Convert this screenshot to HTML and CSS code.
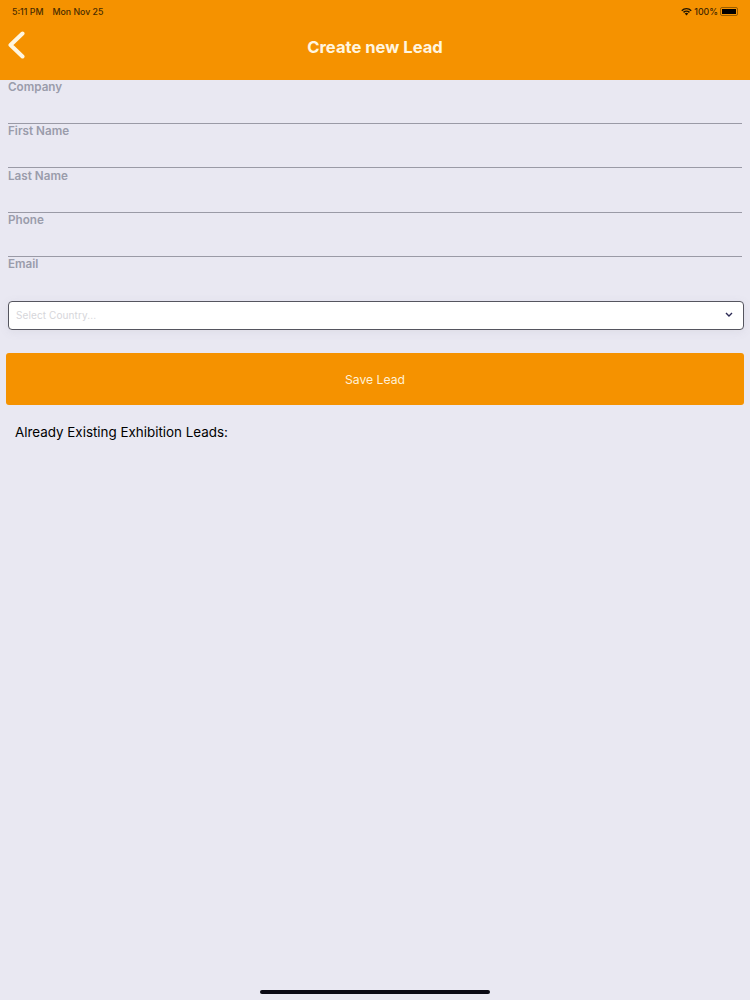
FILE: index.html
```html
<!DOCTYPE html>
<html lang="en">

<head>
    <meta charset="UTF-8">
    <meta name="viewport" content="width=device-width, initial-scale=1.0">
    <title>Create new Lead</title>
    <link rel="stylesheet" href="styles.css">
</head>

<body>
    <div class="container">
        <header class="topbar">
            <div class="status">
                <span class="status-time">5:11 PM</span>
                <span class="status-date">Mon Nov 25</span>
                <span class="status-right">
                    <svg class="wifi" width="11" height="9" viewBox="0 0 12 9">
                        <path d="M0.3 3 A8 8 0 0 1 11.7 3 L10.6 4.1 A6.4 6.4 0 0 0 1.4 4.1 Z" />
                        <path d="M2.2 4.9 A5.4 5.4 0 0 1 9.8 4.9 L8.7 6 A3.8 3.8 0 0 0 3.3 6 Z" />
                        <path d="M4.1 6.8 A2.7 2.7 0 0 1 7.9 6.8 L6 8.8 Z" />
                    </svg>
                    <span>100%</span>
                    <span class="battery"><span class="battery-fill"></span></span>
                </span>
            </div>
            <div class="navbar">
                <a class="back" href="#">
                    <svg width="18" height="30" viewBox="0 0 18 30">
                        <path d="M15.5 3.5 L3.5 15 L15.5 26.5" />
                    </svg>
                </a>
                <h1>Create new Lead</h1>
            </div>
        </header>

        <main>
            <form class="lead-form">
                <div class="field"><label>Company</label></div>
                <div class="field"><label>First Name</label></div>
                <div class="field"><label>Last Name</label></div>
                <div class="field"><label>Phone</label></div>
                <div class="field field-last"><label>Email</label></div>

                <div class="select">
                    <span class="select-text">Select Country...</span>
                    <svg width="8" height="6" viewBox="0 0 8 6">
                        <path d="M1 1 L4 4 L7 1" />
                    </svg>
                </div>

                <button class="save" type="button">Save Lead</button>
            </form>

            <h2 class="existing">Already Existing Exhibition Leads:</h2>
        </main>

        <div class="home-bar"></div>
    </div>
</body>

</html>
```

FILE: styles.css
```css
* {
    margin: 0;
    padding: 0;
    box-sizing: border-box;
}

body {
    font-family: Inter, "Liberation Sans", sans-serif;
    background-color: #e9e8f2;
}

.container {
    width: 750px;
    height: 1000px;
    position: relative;
    overflow: hidden;
    background-color: #e9e8f2;
}

.topbar {
    height: 80px;
    background-color: #f59200;
}

.status {
    height: 19px;
    padding: 3px 12px 0 12px;
    display: flex;
    align-items: center;
    font-size: 8.8px;
    font-weight: 500;
    color: #4a2c00;
}

.status-date {
    margin-left: 9px;
}

.status-right {
    margin-left: auto;
    display: flex;
    align-items: center;
    gap: 2px;
    color: #3d2500;
}

.wifi path {
    fill: #1f1400;
}

.battery {
    width: 18px;
    height: 9px;
    padding: 1px;
    border: 1px solid #9a5e00;
    border-radius: 2px;
    display: block;
}

.battery-fill {
    display: block;
    height: 100%;
    background-color: #000;
}

.navbar {
    height: 55px;
    position: relative;
    display: flex;
    align-items: center;
    justify-content: center;
}

.navbar h1 {
    font-size: 16.6px;
    font-weight: 700;
    color: #fff6e0;
}

.back {
    position: absolute;
    left: 7px;
    top: 11px;
    display: block;
    height: 30px;
}

.back path {
    fill: none;
    stroke: #fff6e0;
    stroke-width: 4;
    stroke-linecap: round;
    stroke-linejoin: round;
}

.lead-form {
    padding: 0 6px 0 6px;
}

.field {
    height: 44.2px;
    margin: 0 2px;
    border-bottom: 1px solid #9a9aa6;
}

.field label {
    display: block;
    padding-top: 0.2px;
    font-size: 11.7px;
    line-height: 14px;
    font-weight: 600;
    color: #9a9cab;
}

.field-last {
    border-bottom: none;
}

.select {
    height: 29px;
    margin: 0 0 0 2px;
    padding: 0 10px 0 7px;
    display: flex;
    align-items: center;
    justify-content: space-between;
    background-color: #fff;
    border: 1.5px solid #55555f;
    border-radius: 4px;
    box-shadow: 0 2px 10px rgba(120, 120, 140, 0.1);
}

.select-text {
    font-size: 10px;
    letter-spacing: 0.1px;
    color: #d6d6da;
}

.select path {
    fill: none;
    stroke: #2c2a55;
    stroke-width: 1.4;
}

.save {
    display: block;
    width: 738px;
    height: 52px;
    margin-top: 23px;
    padding-top: 2px;
    font-family: inherit;
    font-size: 12.2px;
    color: #fff1d8;
    background-color: #f59200;
    border: none;
    border-radius: 3px;
}

.existing {
    margin: 18px 0 0 15px;
    font-size: 13.4px;
    line-height: 18px;
    font-weight: 400;
    color: #000;
}

.home-bar {
    position: absolute;
    left: 260px;
    bottom: 6px;
    width: 230px;
    height: 4px;
    border-radius: 2px;
    background-color: #0a0a14;
}
```
